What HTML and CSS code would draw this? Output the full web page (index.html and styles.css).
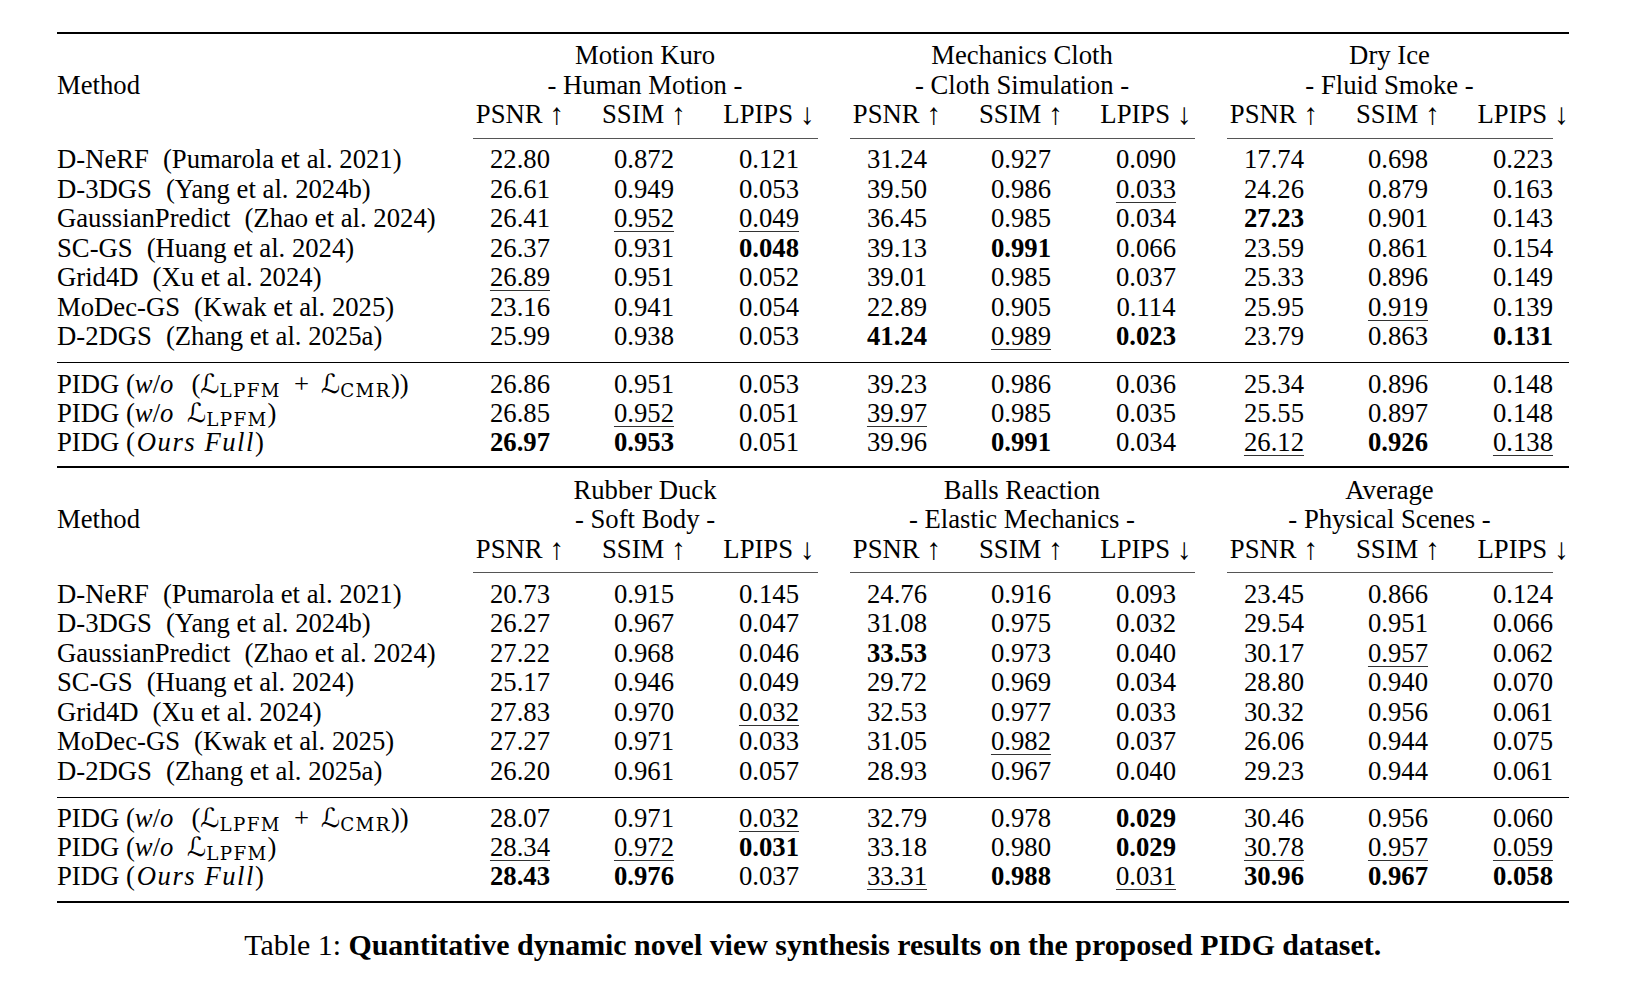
FILE: index.html
```html
<!DOCTYPE html>
<html lang="en">
<head>
<meta charset="utf-8">
<title>Table 1</title>
<link rel="stylesheet" href="styles.css">
</head>
<body>
<div class="page">
<table class="results">
<colgroup>
<col class="c-method">
<col class="c-psnr"><col class="c-ssim"><col class="c-lpips">
<col class="c-psnr"><col class="c-ssim"><col class="c-lpips">
<col class="c-psnr"><col class="c-ssim"><col class="c-last">
</colgroup>

<tbody class="head">
<tr class="h1"><td class="method" rowspan="3">Method</td><td colspan="3">Motion Kuro</td><td colspan="3">Mechanics Cloth</td><td colspan="3">Dry Ice</td></tr>
<tr><td colspan="3">- Human Motion -</td><td colspan="3">- Cloth Simulation -</td><td colspan="3">- Fluid Smoke -</td></tr>
<tr><td>PSNR <span class="arr">↑</span></td><td>SSIM <span class="arr">↑</span></td><td>LPIPS <span class="arr">↓</span></td><td>PSNR <span class="arr">↑</span></td><td>SSIM <span class="arr">↑</span></td><td>LPIPS <span class="arr">↓</span></td><td>PSNR <span class="arr">↑</span></td><td>SSIM <span class="arr">↑</span></td><td class="last">LPIPS <span class="arr">↓</span></td></tr>
<tr class="cmid"><td></td><td colspan="3"><div class="cline"></div></td><td colspan="3"><div class="cline"></div></td><td colspan="3"><div class="cline"></div></td></tr>
</tbody>
<tbody class="base">
<tr><td class="name">D-NeRF<span class="cite">(Pumarola et al. 2021)</span></td><td>22.80</td><td>0.872</td><td>0.121</td><td>31.24</td><td>0.927</td><td>0.090</td><td>17.74</td><td>0.698</td><td class="last">0.223</td></tr>
<tr><td class="name">D-3DGS<span class="cite">(Yang et al. 2024b)</span></td><td>26.61</td><td>0.949</td><td>0.053</td><td>39.50</td><td>0.986</td><td><span class="u">0.033</span></td><td>24.26</td><td>0.879</td><td class="last">0.163</td></tr>
<tr><td class="name">GaussianPredict<span class="cite">(Zhao et al. 2024)</span></td><td>26.41</td><td><span class="u">0.952</span></td><td><span class="u">0.049</span></td><td>36.45</td><td>0.985</td><td>0.034</td><td><b>27.23</b></td><td>0.901</td><td class="last">0.143</td></tr>
<tr><td class="name">SC-GS<span class="cite">(Huang et al. 2024)</span></td><td>26.37</td><td>0.931</td><td><b>0.048</b></td><td>39.13</td><td><b>0.991</b></td><td>0.066</td><td>23.59</td><td>0.861</td><td class="last">0.154</td></tr>
<tr><td class="name">Grid4D<span class="cite">(Xu et al. 2024)</span></td><td><span class="u">26.89</span></td><td>0.951</td><td>0.052</td><td>39.01</td><td>0.985</td><td>0.037</td><td>25.33</td><td>0.896</td><td class="last">0.149</td></tr>
<tr><td class="name">MoDec-GS<span class="cite">(Kwak et al. 2025)</span></td><td>23.16</td><td>0.941</td><td>0.054</td><td>22.89</td><td>0.905</td><td>0.114</td><td>25.95</td><td><span class="u">0.919</span></td><td class="last">0.139</td></tr>
<tr><td class="name">D-2DGS<span class="cite">(Zhang et al. 2025a)</span></td><td>25.99</td><td>0.938</td><td>0.053</td><td><b>41.24</b></td><td><span class="u">0.989</span></td><td><b>0.023</b></td><td>23.79</td><td>0.863</td><td class="last"><b>0.131</b></td></tr>
</tbody>
<tbody class="ours">
<tr><td class="name">PIDG (<span class="mi">w</span>/<span class="mi">o</span><span class="po">(</span><span class="cal">ℒ</span><span class="sb">LPFM</span><span class="op">+</span><span class="cal">ℒ</span><span class="sb">CMR</span>))</td><td>26.86</td><td>0.951</td><td>0.053</td><td>39.23</td><td>0.986</td><td>0.036</td><td>25.34</td><td>0.896</td><td class="last">0.148</td></tr>
<tr><td class="name">PIDG (<span class="mi">w</span>/<span class="mi">o</span><span class="cal gap">ℒ</span><span class="sb">LPFM</span>)</td><td>26.85</td><td><span class="u">0.952</span></td><td>0.051</td><td><span class="u">39.97</span></td><td>0.985</td><td>0.035</td><td>25.55</td><td>0.897</td><td class="last">0.148</td></tr>
<tr><td class="name">PIDG (<span class="mi full">Ours Full</span>)</td><td><b>26.97</b></td><td><b>0.953</b></td><td>0.051</td><td>39.96</td><td><b>0.991</b></td><td>0.034</td><td><span class="u">26.12</span></td><td><b>0.926</b></td><td class="last"><span class="u">0.138</span></td></tr>
</tbody>

<tbody class="head">
<tr class="h1"><td class="method" rowspan="3">Method</td><td colspan="3">Rubber Duck</td><td colspan="3">Balls Reaction</td><td colspan="3">Average</td></tr>
<tr><td colspan="3">- Soft Body -</td><td colspan="3">- Elastic Mechanics -</td><td colspan="3">- Physical Scenes -</td></tr>
<tr><td>PSNR <span class="arr">↑</span></td><td>SSIM <span class="arr">↑</span></td><td>LPIPS <span class="arr">↓</span></td><td>PSNR <span class="arr">↑</span></td><td>SSIM <span class="arr">↑</span></td><td>LPIPS <span class="arr">↓</span></td><td>PSNR <span class="arr">↑</span></td><td>SSIM <span class="arr">↑</span></td><td class="last">LPIPS <span class="arr">↓</span></td></tr>
<tr class="cmid"><td></td><td colspan="3"><div class="cline"></div></td><td colspan="3"><div class="cline"></div></td><td colspan="3"><div class="cline"></div></td></tr>
</tbody>
<tbody class="base">
<tr><td class="name">D-NeRF<span class="cite">(Pumarola et al. 2021)</span></td><td>20.73</td><td>0.915</td><td>0.145</td><td>24.76</td><td>0.916</td><td>0.093</td><td>23.45</td><td>0.866</td><td class="last">0.124</td></tr>
<tr><td class="name">D-3DGS<span class="cite">(Yang et al. 2024b)</span></td><td>26.27</td><td>0.967</td><td>0.047</td><td>31.08</td><td>0.975</td><td>0.032</td><td>29.54</td><td>0.951</td><td class="last">0.066</td></tr>
<tr><td class="name">GaussianPredict<span class="cite">(Zhao et al. 2024)</span></td><td>27.22</td><td>0.968</td><td>0.046</td><td><b>33.53</b></td><td>0.973</td><td>0.040</td><td>30.17</td><td><span class="u">0.957</span></td><td class="last">0.062</td></tr>
<tr><td class="name">SC-GS<span class="cite">(Huang et al. 2024)</span></td><td>25.17</td><td>0.946</td><td>0.049</td><td>29.72</td><td>0.969</td><td>0.034</td><td>28.80</td><td>0.940</td><td class="last">0.070</td></tr>
<tr><td class="name">Grid4D<span class="cite">(Xu et al. 2024)</span></td><td>27.83</td><td>0.970</td><td><span class="u">0.032</span></td><td>32.53</td><td>0.977</td><td>0.033</td><td>30.32</td><td>0.956</td><td class="last">0.061</td></tr>
<tr><td class="name">MoDec-GS<span class="cite">(Kwak et al. 2025)</span></td><td>27.27</td><td>0.971</td><td>0.033</td><td>31.05</td><td><span class="u">0.982</span></td><td>0.037</td><td>26.06</td><td>0.944</td><td class="last">0.075</td></tr>
<tr><td class="name">D-2DGS<span class="cite">(Zhang et al. 2025a)</span></td><td>26.20</td><td>0.961</td><td>0.057</td><td>28.93</td><td>0.967</td><td>0.040</td><td>29.23</td><td>0.944</td><td class="last">0.061</td></tr>
</tbody>
<tbody class="ours end">
<tr><td class="name">PIDG (<span class="mi">w</span>/<span class="mi">o</span><span class="po">(</span><span class="cal">ℒ</span><span class="sb">LPFM</span><span class="op">+</span><span class="cal">ℒ</span><span class="sb">CMR</span>))</td><td>28.07</td><td>0.971</td><td><span class="u">0.032</span></td><td>32.79</td><td>0.978</td><td><b>0.029</b></td><td>30.46</td><td>0.956</td><td class="last">0.060</td></tr>
<tr><td class="name">PIDG (<span class="mi">w</span>/<span class="mi">o</span><span class="cal gap">ℒ</span><span class="sb">LPFM</span>)</td><td><span class="u">28.34</span></td><td><span class="u">0.972</span></td><td><b>0.031</b></td><td>33.18</td><td>0.980</td><td><b>0.029</b></td><td><span class="u">30.78</span></td><td><span class="u">0.957</span></td><td class="last"><span class="u">0.059</span></td></tr>
<tr><td class="name">PIDG (<span class="mi full">Ours Full</span>)</td><td><b>28.43</b></td><td><b>0.976</b></td><td>0.037</td><td><span class="u">33.31</span></td><td><b>0.988</b></td><td><span class="u">0.031</span></td><td><b>30.96</b></td><td><b>0.967</b></td><td class="last"><b>0.058</b></td></tr>
</tbody>
</table>
<p class="caption">Table 1: <b>Quantitative dynamic novel view synthesis results on the proposed PIDG dataset.</b></p>
</div>
</body>
</html>
```

FILE: styles.css
```css
html, body {
  margin: 0;
  padding: 0;
  background: #ffffff;
  color: #000000;
}

.page {
  padding: 32px 0 0 57px;
  width: 1511.5px;
}

.results {
  width: 1511.5px;
  table-layout: fixed;
  border-collapse: separate;
  border-spacing: 0;
  font-family: "Liberation Serif", "Times New Roman", serif;
  font-size: 26.7px;
  line-height: 29.5px;
  color: #000;
}

.c-method { width: 399.5px; }
.c-psnr { width: 127px; }
.c-ssim { width: 121px; }
.c-lpips { width: 129px; }
.c-last { width: 110px; }

.results td {
  padding: 0;
  text-align: center;
  white-space: nowrap;
  vertical-align: baseline;
}

.results td.last {
  padding-left: 19px;
}

.results td.name,
.results td.method {
  text-align: left;
}

.results td.method {
  vertical-align: middle;
}

.h1 td {
  border-top: 2px solid #000;
  padding-top: 7.2px;
}

.arr {
  font-size: 1.12em;
  line-height: 0;
  vertical-align: -1px;
}

.results .cmid td {
  padding: 8.3px 0 6.5px;
  font-size: 0;
  line-height: 0;
}

.cline {
  height: 1px;
  background: #555;
  margin: 0 15.5px 0 16.5px;
}

.base tr:last-child td {
  padding-bottom: 10.26px;
}

.ours td {
  line-height: 29px;
}

.results .ours tr:first-child td {
  border-top: 1px solid #000;
  padding-top: 6.6px;
}

.results .ours tr:last-child td {
  padding-bottom: 9.5px;
}

.results .end tr:last-child td {
  border-bottom: 2px solid #000;
}

.cite {
  margin-left: 14px;
}

.u {
  text-decoration: underline;
  text-decoration-thickness: 1px;
  text-underline-offset: 3.5px;
  text-decoration-color: #333;
}

.mi {
  font-style: italic;
}

.mi.full {
  letter-spacing: 1.5px;
  margin-left: 2px;
}

.po {
  margin-left: 18px;
}

.cal {
  font-family: "DejaVu Serif", "DejaVu Sans", serif;
  line-height: 0;
}

.cal.gap {
  margin-left: 13.5px;
}

.sb {
  font-family: "DejaVu Serif", "Liberation Serif", serif;
  font-size: 18.3px;
  letter-spacing: 1.4px;
  vertical-align: -4px;
  line-height: 0;
}

.op {
  display: inline-block;
  width: 21px;
  text-align: center;
  margin: 0 9px 0 10px;
  line-height: 0;
}

.caption {
  width: 1511.5px;
  margin: 25.5px 0 0;
  text-align: center;
  font-family: "Liberation Serif", "Times New Roman", serif;
  font-size: 29.9px;
  line-height: 34px;
}
```
